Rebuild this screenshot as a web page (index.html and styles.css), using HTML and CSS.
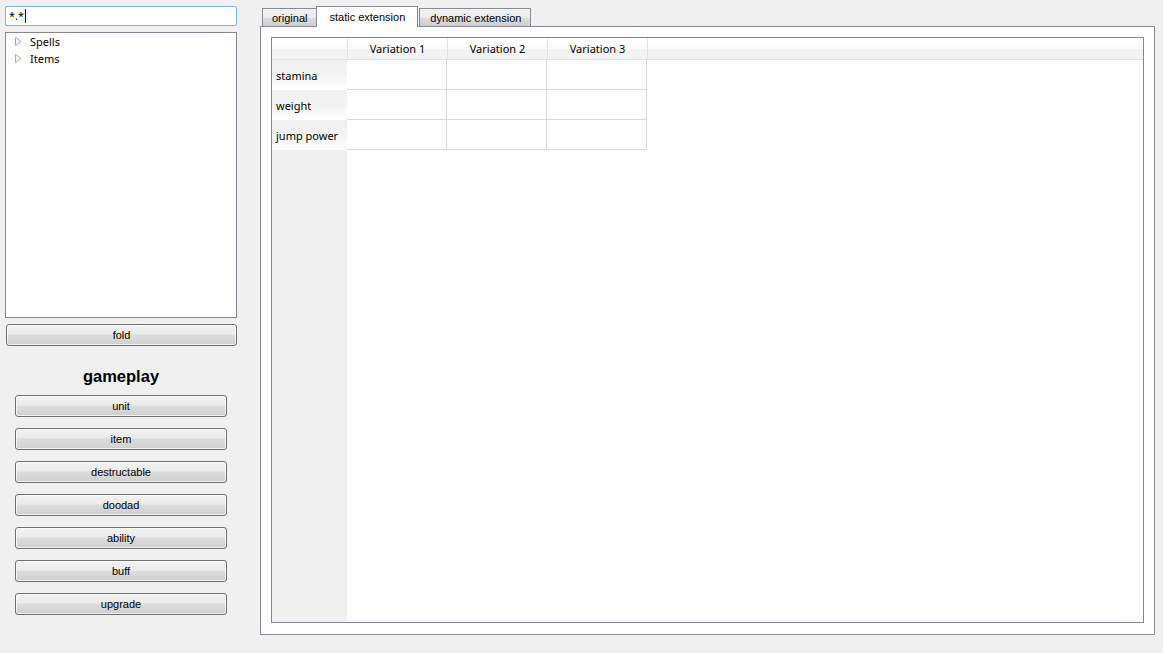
FILE: index.html
```html
<!DOCTYPE html>
<html lang="en">
<head>
<meta charset="UTF-8">
<title>Object Editor</title>
<link rel="stylesheet" href="styles.css">
</head>
<body>
<div class="window">
  <div class="side">
    <div class="search">*.*<span class="caret"></span></div>
    <div class="tree">
      <div class="tree-item">
        <svg class="arrow" width="7" height="9" viewBox="0 0 7 9"><polygon points="0.5,0.5 6,4.5 0.5,8.5" fill="none" stroke="#a6a6a6"/></svg>
        <span>Spells</span>
      </div>
      <div class="tree-item">
        <svg class="arrow" width="7" height="9" viewBox="0 0 7 9"><polygon points="0.5,0.5 6,4.5 0.5,8.5" fill="none" stroke="#a6a6a6"/></svg>
        <span>Items</span>
      </div>
    </div>
    <button class="btn fold">fold</button>
    <div class="section-title">gameplay</div>
    <div class="btn-list">
      <button class="btn">unit</button>
      <button class="btn">item</button>
      <button class="btn">destructable</button>
      <button class="btn">doodad</button>
      <button class="btn">ability</button>
      <button class="btn">buff</button>
      <button class="btn">upgrade</button>
    </div>
  </div>

  <div class="tabs">
    <div class="tab-bar">
      <div class="tab">original</div>
      <div class="tab active">static extension</div>
      <div class="tab">dynamic extension</div>
    </div>
    <div class="tab-pane">
      <div class="grid">
        <div class="grid-head">
          <div class="corner"></div>
          <div class="col-head">Variation 1</div>
          <div class="col-head">Variation 2</div>
          <div class="col-head">Variation 3</div>
          <div class="col-head rest"></div>
        </div>
        <div class="grid-body">
          <div class="row-heads">
            <div class="row-head">stamina</div>
            <div class="row-head">weight</div>
            <div class="row-head">jump power</div>
          </div>
          <div class="cells">
            <div class="cell"></div><div class="cell"></div><div class="cell"></div>
            <div class="cell"></div><div class="cell"></div><div class="cell"></div>
            <div class="cell"></div><div class="cell"></div><div class="cell"></div>
          </div>
        </div>
      </div>
    </div>
  </div>
</div>
</body>
</html>
```

FILE: styles.css
```css
body {
    margin: 0;
    background-color: #f0f0f0;
    font-family: "Liberation Sans", Arial, sans-serif;
    font-size: 11px;
    color: #000;
}
.window {
    display: flex;
    height: 653px;
}
.side {
    width: 243px;
    padding: 6px 0 0 5px;
    box-sizing: border-box;
    display: flex;
    flex-direction: column;
}
.search {
    width: 232px;
    height: 20px;
    box-sizing: border-box;
    border: 1px solid #7eb4ea;
    border-radius: 2px;
    background: #fff;
    padding: 2px 3px;
    font-family: "Noto Sans", sans-serif;
    font-size: 11px;
    line-height: 14px;
}
.caret {
    display: inline-block;
    width: 1px;
    height: 14px;
    background: #000;
    vertical-align: top;
    margin-left: 1px;
}
.tree {
    margin-top: 6px;
    width: 232px;
    height: 286px;
    box-sizing: border-box;
    border: 1px solid #828790;
    background: #fff;
    padding-top: 0;
    font-family: "Noto Sans", sans-serif;
    font-size: 11px;
}
.tree-item {
    height: 17px;
    display: flex;
    align-items: center;
    padding-left: 9px;
}
.arrow {
    margin-right: 8px;
}
.btn {
    display: block;
    height: 22px;
    box-sizing: border-box;
    border: 1px solid #707070;
    border-radius: 3px;
    background: linear-gradient(#f2f2f2 0%, #ebebeb 45%, #dddddd 50%, #cfcfcf 100%);
    box-shadow: inset 0 0 0 1px rgba(255, 255, 255, 0.7);
    font-family: "Liberation Sans", Arial, sans-serif;
    font-size: 11px;
    color: #000;
    padding: 0;
    margin: 0;
}
.fold {
    margin-top: 6px;
    margin-left: 1px;
    width: 231px;
}
.section-title {
    width: 232px;
    text-align: center;
    font-family: "Liberation Sans", Arial, sans-serif;
    font-weight: bold;
    font-size: 16.5px;
    margin-top: 19px;
    height: 22px;
    line-height: 22px;
}
.btn-list {
    display: flex;
    flex-direction: column;
    gap: 11px;
    margin-top: 8px;
    margin-left: 10px;
}
.btn-list .btn {
    width: 212px;
}
.tabs {
    margin-left: 17px;
    margin-top: 6px;
    width: 895px;
    display: flex;
    flex-direction: column;
}
.tab-bar {
    display: flex;
    padding-left: 2px;
    height: 20px;
    align-items: flex-end;
    position: relative;
    z-index: 1;
}
.tab {
    height: 18px;
    box-sizing: border-box;
    border: 1px solid #898c95;
    border-bottom: none;
    background: linear-gradient(#f2f2f2 0%, #ebebeb 50%, #dddddd 51%, #cfcfcf 100%);
    padding: 0 9px;
    line-height: 18px;
    margin-right: -1px;
}
.tab.active {
    height: 21px;
    background: #fff;
    padding: 0 12px;
    line-height: 20px;
    margin-bottom: -1px;
}
.tab.active + .tab {
    margin-left: 2px;
    padding: 0 9px 0 10px;
}
.tab-pane {
    width: 895px;
    height: 609px;
    box-sizing: border-box;
    border: 1px solid #898c95;
    background: #fff;
    padding: 10px;
}
.grid {
    height: 586px;
    box-sizing: border-box;
    border: 1px solid #828790;
    display: flex;
    flex-direction: column;
    font-family: "Noto Sans", sans-serif;
    font-size: 11px;
}
.grid-head {
    display: flex;
    height: 22px;
    box-sizing: border-box;
    border-bottom: 1px solid #e2e2e2;
    background: linear-gradient(#ffffff 0%, #fbfbfb 50%, #f2f3f5 51%, #f2f3f5 100%);
}
.corner {
    width: 75px;
    border-right: 1px solid #e2e2e2;
}
.col-head {
    width: 100px;
    box-sizing: border-box;
    border-right: 1px solid #e2e2e2;
    text-align: center;
    line-height: 22px;
}
.col-head.rest {
    flex: 1;
    border-right: none;
}
.grid-body {
    flex: 1;
    display: flex;
}
.row-heads {
    width: 75px;
    background: #f0f0f0;
}
.row-head {
    height: 30px;
    box-sizing: border-box;
    padding-left: 4px;
    line-height: 32px;
    background: linear-gradient(#f0f0f0 0%, #f3f3f3 50%, #ffffff 100%);
}
.cells {
    display: grid;
    grid-template-columns: repeat(3, 100px);
    grid-auto-rows: 30px;
    align-content: start;
}
.cell {
    border-right: 1px solid #d8d8d8;
    border-bottom: 1px solid #d8d8d8;
}
```
